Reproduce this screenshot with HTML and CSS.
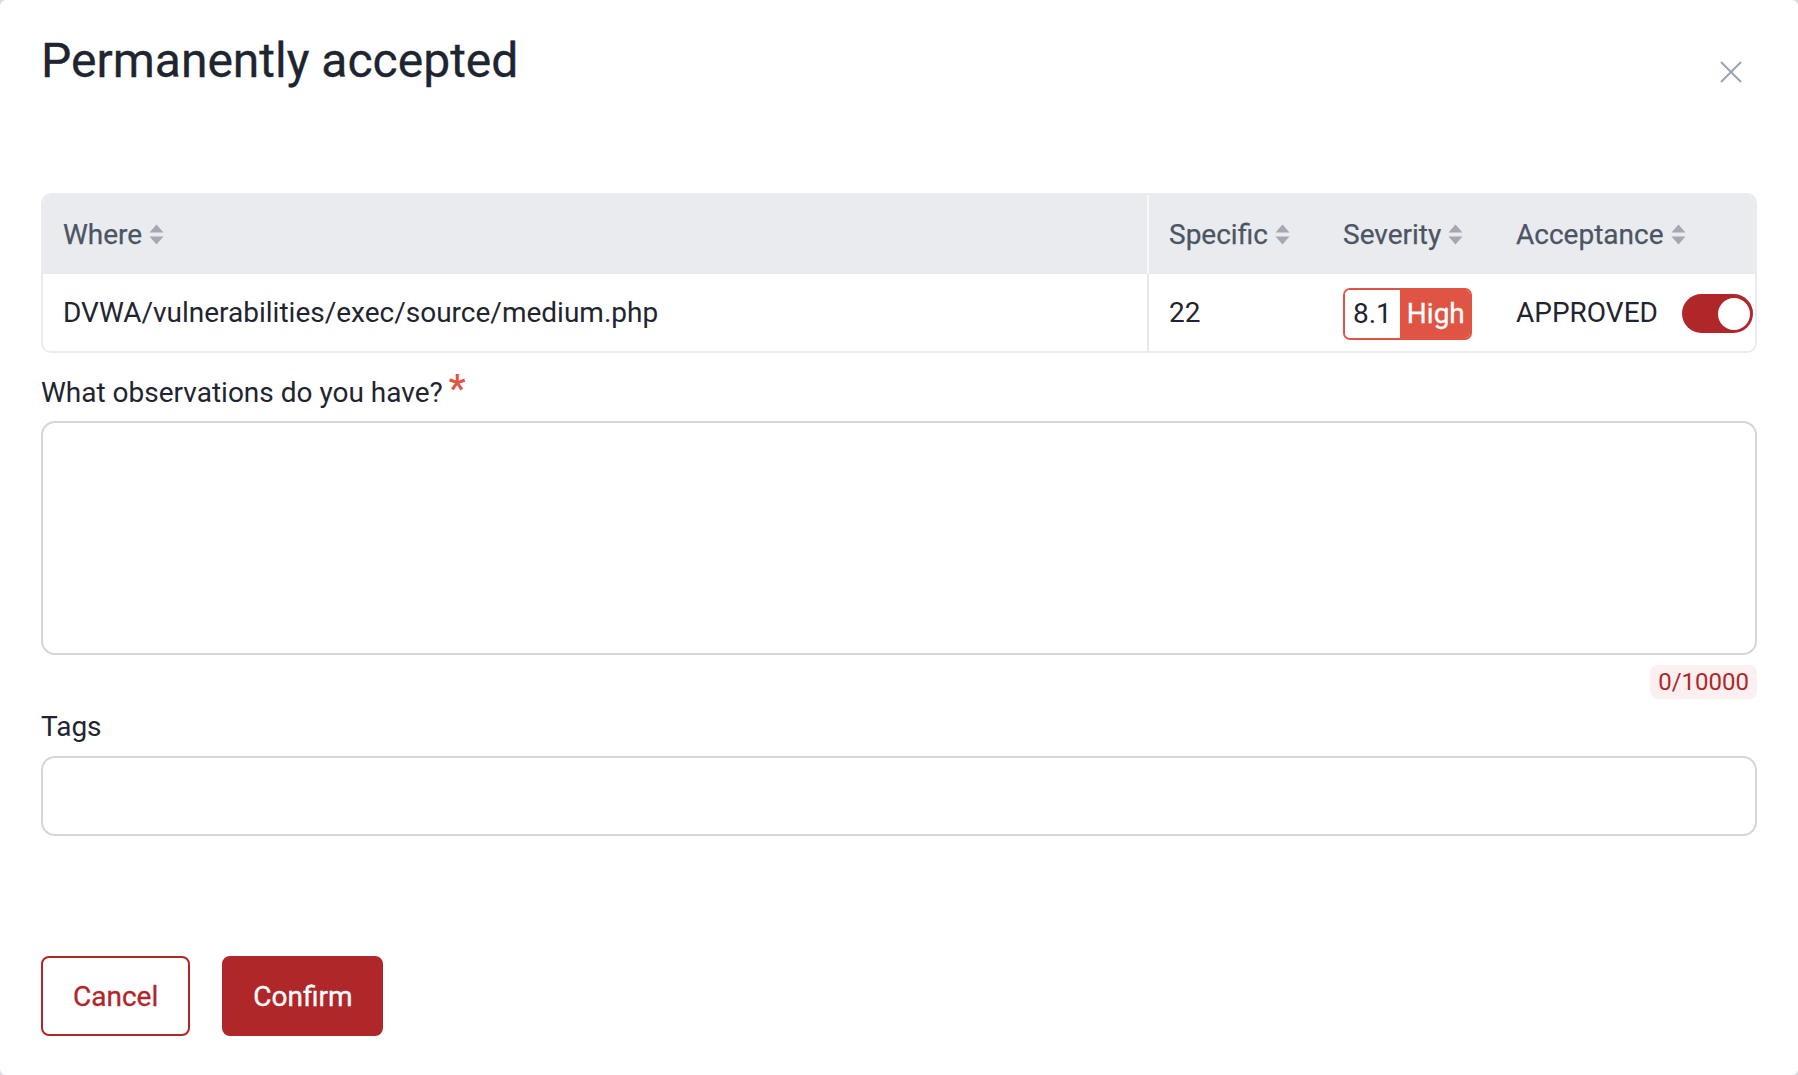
FILE: index.html
```html
<!DOCTYPE html>
<html lang="en">
<head>
<meta charset="utf-8">
<title>Permanently accepted</title>
<link rel="stylesheet" href="styles.css">
</head>
<body>
<div class="modal">
  <div class="modal-head">
    <h1 class="title">Permanently accepted</h1>
    <button class="close" aria-label="Close">
      <svg width="22" height="22" viewBox="0 0 22 22"><path d="M1 1 L21 21 M21 1 L1 21" stroke="#9ca3af" stroke-width="2" fill="none"/></svg>
    </button>
  </div>

  <div class="table">
    <div class="th c1"><span>Where</span><svg class="sort" width="15" height="21" viewBox="0 0 15 21"><path d="M7.5 0.5 L14.5 8.5 L0.5 8.5 Z M0.5 12.5 L14.5 12.5 L7.5 20.5 Z" fill="#a5a8b0"/></svg></div>
    <div class="th c2"><span>Specific</span><svg class="sort" width="15" height="21" viewBox="0 0 15 21"><path d="M7.5 0.5 L14.5 8.5 L0.5 8.5 Z M0.5 12.5 L14.5 12.5 L7.5 20.5 Z" fill="#a5a8b0"/></svg></div>
    <div class="th c3"><span>Severity</span><svg class="sort" width="15" height="21" viewBox="0 0 15 21"><path d="M7.5 0.5 L14.5 8.5 L0.5 8.5 Z M0.5 12.5 L14.5 12.5 L7.5 20.5 Z" fill="#a5a8b0"/></svg></div>
    <div class="th c4"><span>Acceptance</span><svg class="sort" width="15" height="21" viewBox="0 0 15 21"><path d="M7.5 0.5 L14.5 8.5 L0.5 8.5 Z M0.5 12.5 L14.5 12.5 L7.5 20.5 Z" fill="#a5a8b0"/></svg></div>

    <div class="td c1">DVWA/vulnerabilities/exec/source/medium.php</div>
    <div class="td c2">22</div>
    <div class="td c3">
      <span class="badge"><span class="score">8.1</span><span class="level">High</span></span>
    </div>
    <div class="td c4 accept">
      <span>APPROVED</span>
      <span class="toggle"><span class="knob"></span></span>
    </div>
  </div>

  <label class="label label-obs">What observations do you have?<span class="req">*</span></label>
  <textarea class="field area"></textarea>
  <div class="counter-row"><span class="counter">0/10000</span></div>

  <label class="label label-tags">Tags</label>
  <input class="field input" type="text">

  <div class="actions">
    <button class="btn btn-outline">Cancel</button>
    <button class="btn btn-solid">Confirm</button>
  </div>
</div>
</body>
</html>
```

FILE: styles.css
```css
* { box-sizing: border-box; }

html, body {
  margin: 0;
  padding: 0;
  width: 1798px;
  height: 1075px;
  background: #d9dbe0;
  overflow: hidden;
}

.modal {
  width: 1798px;
  height: 1075px;
  background: #ffffff;
  border-radius: 6px;
  padding: 0 41px;
  font-family: Roboto, "Liberation Sans", Arial, sans-serif;
  color: #1f2530;
  display: flex;
  flex-direction: column;
}

.modal-head {
  height: 193px;
  display: flex;
  justify-content: space-between;
  align-items: flex-start;
}

.title {
  margin: 0;
  padding-top: 32px;
  font-size: 48px;
  line-height: 1.2;
  font-weight: 400;
  color: #1f2530;
  -webkit-text-stroke: 0.3px #1f2530;
}

.close {
  margin-top: 61px;
  margin-right: 15px;
  padding: 0;
  border: 0;
  background: transparent;
  width: 22px;
  height: 22px;
  display: block;
}
.close svg { display: block; }

/* table */
.table {
  display: grid;
  grid-template-columns: 1106px 174px 173px 1fr;
  grid-template-rows: 79px 77px;
  border: 2px solid #e9ebef;
  border-radius: 10px;
  overflow: hidden;
  font-size: 28px;
  line-height: 42px;
}

.th {
  background: #e9ebef;
  color: #4b5563;
  font-weight: 400;
  -webkit-text-stroke: 0.25px #4b5563;
  display: flex;
  align-items: center;
  gap: 7px;
  padding-left: 20px;
}
.th.c1 { border-right: 2px solid #f7f8fa; }
.sort { display: block; flex: none; }

.td {
  display: flex;
  align-items: center;
  padding-left: 20px;
  color: #1f2530;
  background: #fff;
}
.td.c1 { border-right: 2px solid #e7e8ec; }

.badge {
  display: inline-flex;
  height: 52px;
  border: 2px solid #e05444;
  border-radius: 7px;
  overflow: hidden;
  margin-top: 3px;
}
.score {
  background: #fff;
  color: #1f2530;
  padding: 0 8px;
  line-height: 48px;
}
.level {
  background: #e05444;
  color: #fff;
  font-weight: 400;
  -webkit-text-stroke: 0.3px #fff;
  padding: 0 5px 0 7px;
  line-height: 48px;
}

.accept {
  justify-content: space-between;
  padding-right: 2px;
}

.toggle {
  width: 71px;
  height: 39px;
  border-radius: 20px;
  background: #b0272a;
  display: flex;
  align-items: center;
  justify-content: flex-end;
  padding-right: 3px;
  margin-top: 2px;
}
.knob {
  width: 32px;
  height: 32px;
  border-radius: 50%;
  background: #fff;
}

/* form */
.label {
  display: block;
  font-size: 28px;
  line-height: 42px;
  color: #1f2530;
}
.label-obs { margin-top: 19px; }
.label-tags { margin-top: 7px; }

.req {
  color: #e05444;
  font-size: 38px;
  font-weight: 500;
  line-height: 0;
  margin-left: 6px;
}

.field {
  display: block;
  width: 100%;
  margin: 7px 0 0 0;
  border: 2px solid #d3d6dc;
  border-radius: 14px;
  background: #fff;
  font-family: inherit;
  font-size: 28px;
  outline: none;
  resize: none;
  padding: 12px 20px;
}
.area { height: 234px; }
.input { height: 80px; margin-top: 8px; }

.counter-row {
  display: flex;
  justify-content: flex-end;
  margin-top: 10px;
}
.counter {
  height: 34px;
  line-height: 34px;
  padding: 0 8px;
  border-radius: 8px;
  background: #fcefef;
  color: #b0272a;
  font-size: 24px;
}

.actions {
  display: flex;
  gap: 32px;
  margin-top: 120px;
}
.btn {
  height: 80px;
  padding: 0 30px;
  border: 2px solid #b0272a;
  border-radius: 8px;
  font-family: inherit;
  font-size: 28px;
  font-weight: 400;
  cursor: pointer;
}
.btn-outline { background: #fff; color: #b0272a; -webkit-text-stroke: 0.3px #b0272a; }
.btn-solid { background: #b0272a; color: #fff; -webkit-text-stroke: 0.3px #fff; padding: 0 29px; }
```
